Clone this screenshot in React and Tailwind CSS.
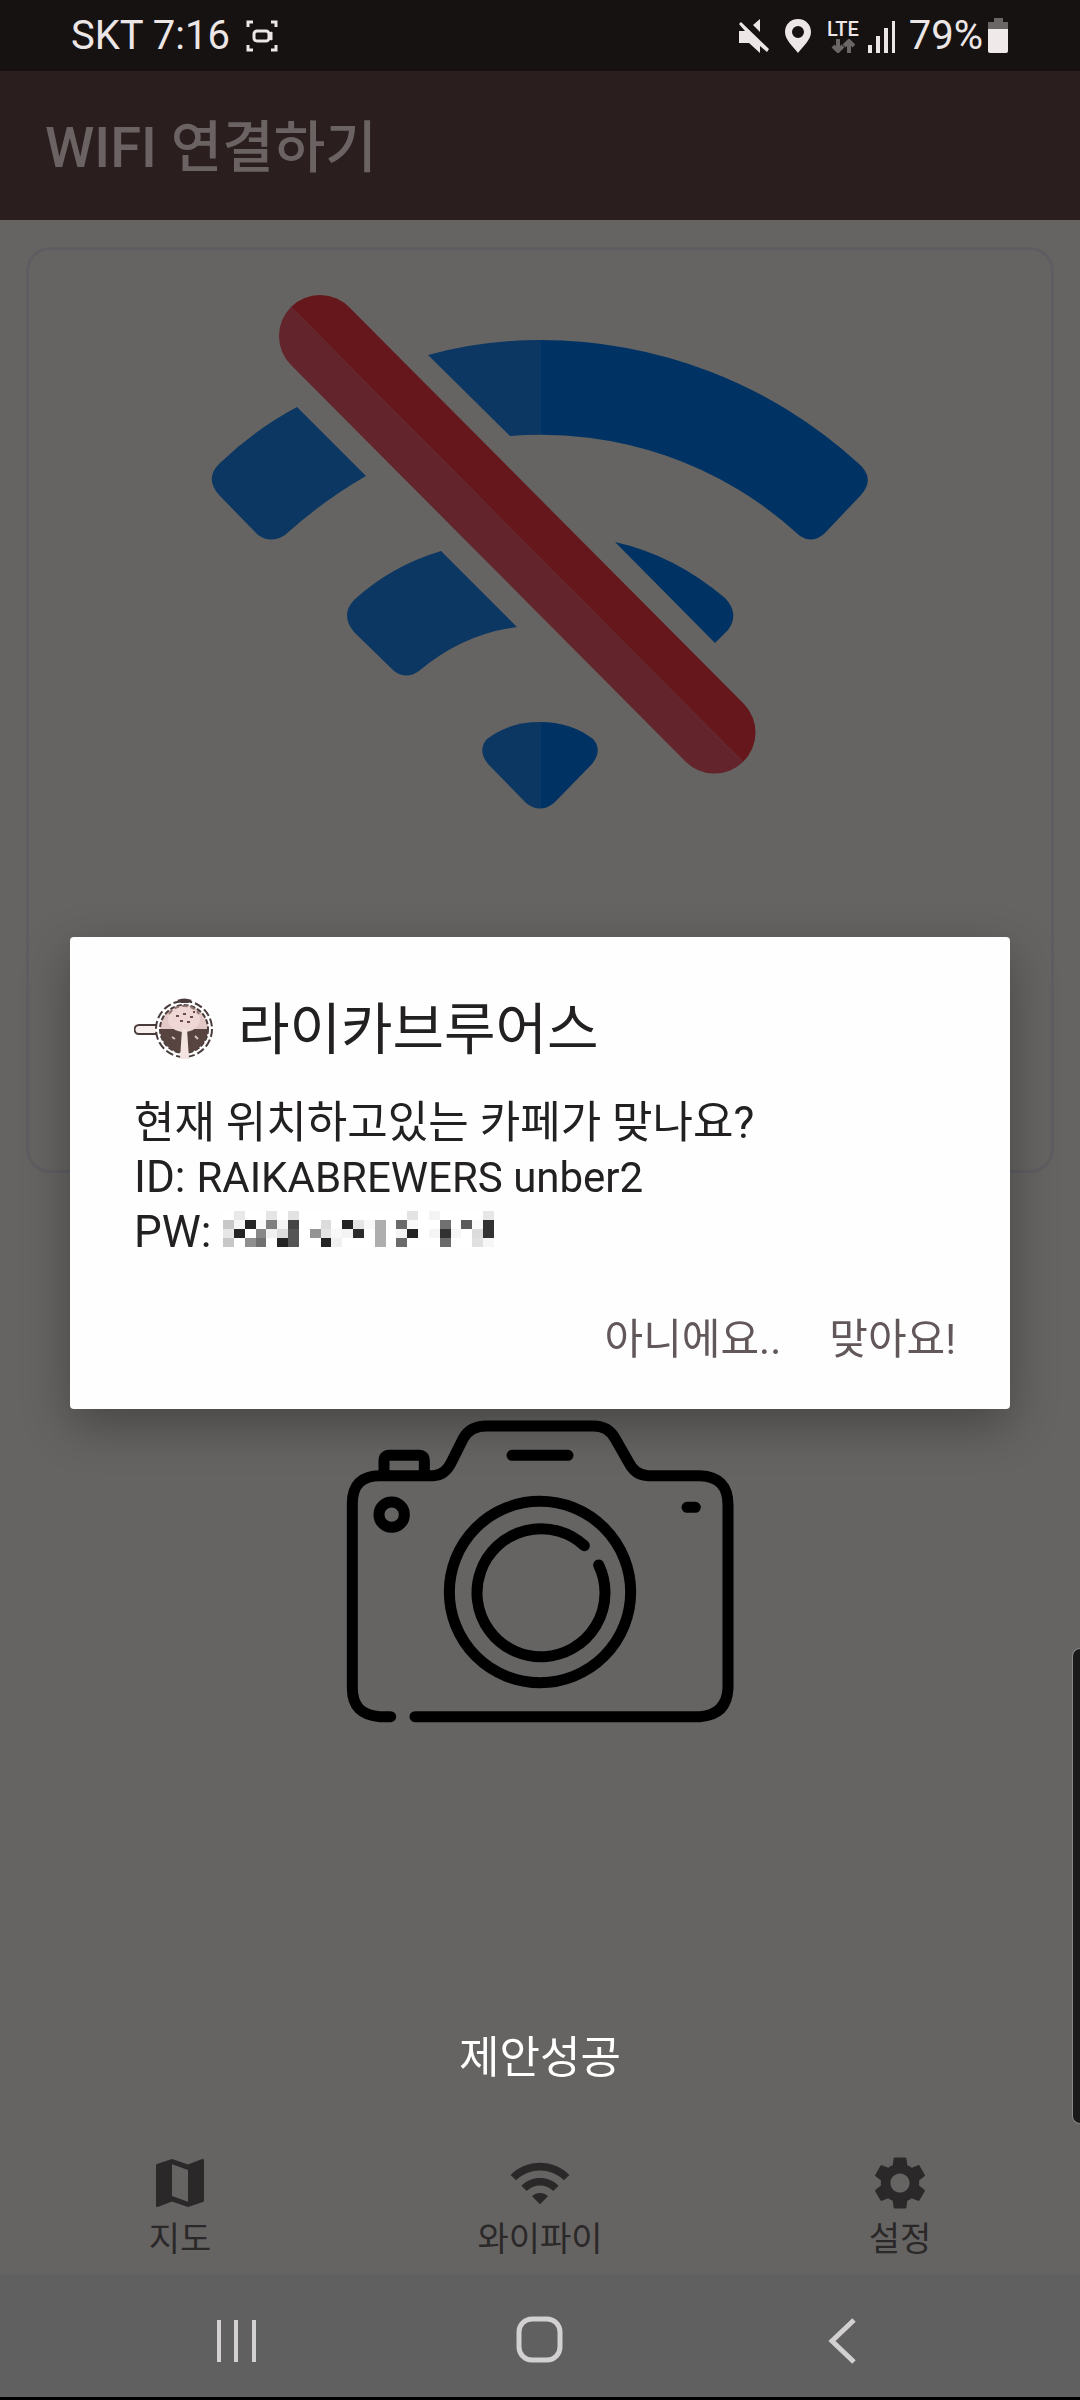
import { MdMap, MdWifi, MdSettings } from "react-icons/md";

const MOSAIC = [
  "ff e8 ff ff e5 ff e2 ff ff ff ff ff ff ff ff ff ff e3 ff f4 ff ff ff ff e6",
  "c7 f5 24 f9 7f f5 45 ff ff dc ff 24 e4 f8 ae ff 6b f8 ff ff 70 ff 5c fa 32",
  "e6 24 ff 88 f0 dd 55 ff 94 e4 f8 f4 2c ff ae ff f4 24 ff f5 32 f6 ff dc 32",
  "c7 ff 8f 70 ff 24 55 ff ff 24 f0 ff ff ff ae ff 6b ff ff ff 6b ff ff e0 f6",
].map((row) => row.split(" "));

function StatusBar() {
  return (
    <div className="flex h-[71px] items-center justify-between bg-[#171212] px-[71px] text-[40px] leading-none text-[#ece6e6]">
      <div className="flex items-center gap-4">
        <span>SKT 7:16</span>
        <svg className="size-8" viewBox="0 0 32 32" fill="none" stroke="currentColor" strokeWidth="3">
          <path d="M2 7V2h5M25 2h5v5M30 25v5h-5M7 30H2v-5" />
          <rect x="8" y="11" width="15" height="10" rx="3" />
          <path d="M23 13l3-1v8l-3-1z" fill="currentColor" strokeWidth="1" />
        </svg>
      </div>
      <div className="flex items-center">
        <svg className="h-[34px] w-[30px]" viewBox="0 0 30 34" fill="currentColor">
          <path d="M0 12h6L0 5l2-2 28 27-2 3-7-6v7l-11-10H0z" />
          <path d="M21 0v13l-7-7z" />
        </svg>
        <svg className="ml-4 h-[34px] w-[26px]" viewBox="0 0 26 34" fill="currentColor">
          <path fillRule="evenodd" d="M13 0C5 0 0 6 0 13c0 8 8 14 13 21 5-7 13-13 13-21C26 6 21 0 13 0zm0 7a6 6 0 1 1 0 12 6 6 0 0 1 0-12z" />
        </svg>
        <div className="ml-4 flex flex-col items-center">
          <span className="text-[20px] leading-[20px] font-medium">LTE</span>
          <svg className="h-[14px] w-[24px] text-[#6a6666]" viewBox="0 0 24 14" fill="none" stroke="currentColor" strokeWidth="4">
            <path d="M7 0v12M2 7l5 5 5-5M18 14V2M13 7l5-5 5 5" />
          </svg>
        </div>
        <svg className="ml-2 h-[34px] w-[30px]" viewBox="0 0 30 34" fill="currentColor">
          <path d="M1 26h4v8H1zM9 17h4v17H9zM17 9h4v25h-4zM25 2h3v32h-3z" />
        </svg>
        <span className="ml-3">79%</span>
        <svg className="ml-1 h-[35px] w-[22px]" viewBox="0 0 22 35">
          <path d="M7 0h9v4h5v8H1V4h6z" fill="#6a6666" />
          <path d="M1 11h20v22a2 2 0 0 1-2 2H3a2 2 0 0 1-2-2z" fill="#efe9e9" />
        </svg>
      </div>
    </div>
  );
}

function WifiOffPicture() {
  return (
    <svg className="h-[560px] w-[720px]" viewBox="180 270 720 560" role="img" aria-label="WIFI">
      <defs>
        <linearGradient id="blue" gradientUnits="userSpaceOnUse" x1="180" x2="900" y1="0" y2="0">
          <stop offset="0.502" stopColor="#0b3762" />
          <stop offset="0.502" stopColor="#003263" />
        </linearGradient>
      </defs>
      <g fill="url(#blue)">
        <path d="M428 355Q482 340 540 340A470 470 0 0 1 858 463Q876 478 861 495L824 534Q812 544 800 536A382 382 0 0 0 510 436Z" />
        <path d="M297 407L366 476Q324 500 285 535Q271 544 258 535L219 495Q204 478 220 463Q254 430 297 407Z" />
        <path d="M441 551L517 627Q463 634 419 671Q406 680 394 671L354 632Q340 615 354 600Q391 566 441 551Z" />
        <path d="M615 542Q674 555 725 598Q740 614 728 630L715 643Z" />
        <path d="M540 722Q571 722 593 739Q603 750 592 764L554 803Q540 814 526 803L488 764Q477 750 487 739Q509 722 540 722Z" />
      </g>
      <path d="M291 307A41 41 0 0 1 350 308L744 704A41 41 0 0 1 743 762Z" fill="#66171b" />
      <path d="M291 307A41 41 0 0 0 291 365L685 761A41 41 0 0 0 743 762Z" fill="#63242b" />
    </svg>
  );
}

function CameraPicture() {
  return (
    <svg className="h-[350px] w-[440px]" viewBox="0 0 1320 1050" fill="none" stroke="#000" strokeWidth="33" strokeLinecap="round">
      <path d="M212 980H180Q97 975 97 895V340Q97 257 180 257H340Q375 257 395 215L430 145Q450 108 500 108H820Q865 108 885 145L925 215Q945 257 985 257H1140Q1224 260 1224 345V895Q1220 975 1140 980H285" />
      <path d="M192 250V212Q192 196 208 196H297Q313 196 313 212V250" />
      <path d="M576 196H744M1101 352H1126" />
      <circle cx="215" cy="374" r="38" />
      <circle cx="660" cy="606" r="272" />
      <path d="M793 467A192 192 0 1 0 836 525" />
    </svg>
  );
}

function CafeLogo() {
  return (
    <svg className="h-[64px] w-[84px]" viewBox="0 0 84 64">
      <path d="M23 27H5a4 4 0 0 0 0 9h18" fill="#f7eeee" stroke="#4a3b3b" strokeWidth="2" />
      <circle cx="50" cy="31" r="28" fill="#fff" stroke="#4a3b3b" strokeWidth="2" strokeDasharray="8 3" />
      <circle cx="50" cy="31" r="24" fill="#e3c9c6" stroke="#4a3b3b" strokeWidth="2" strokeDasharray="5 2" />
      <path d="M26 31h48a24 24 0 0 1-48 0z" fill="#57433f" />
      <ellipse cx="50" cy="21" rx="16" ry="13" fill="#eed7d4" />
      <path d="M35 16q5-8 15-8t15 8" fill="none" stroke="#8d7673" strokeWidth="2" strokeDasharray="5 3" />
      <path d="M48 31h5l2 30h-9z" fill="#f3e4e2" />
      <path d="M43 2q7-3 15 0l-4 3h-7z" fill="#4a3b3b" />
      <path d="M42 18h3M49 16h3M56 19h3M46 23h3M53 24h3M59 14h2" stroke="#6b4a48" strokeWidth="2" />
      <path d="M38 39l3 2M61 38l3 3" stroke="#d9c0bc" strokeWidth="2" />
    </svg>
  );
}

function MaskedPassword() {
  return (
    <svg className="mt-1.5 ml-3 h-9 w-[271px]" viewBox="0 0 25 4" preserveAspectRatio="none" shapeRendering="crispEdges" role="img" aria-label="PW">
      {MOSAIC.map((row, y) =>
        row.map((c, x) => <rect key={`${x}-${y}`} x={x} y={y} width="1" height="1" fill={`#${c}${c}${c}`} />)
      )}
    </svg>
  );
}

function CafeDialog() {
  return (
    <div className="fixed inset-x-0 top-[71px] bottom-[125px] flex items-center px-[70px]">
      <div
        role="dialog"
        aria-labelledby="cafe-name"
        className="w-full rounded-[4px] bg-[#fefefe] pt-[51px] pb-[22px] text-[#222021] shadow-[0_16px_48px_rgba(0,0,0,0.3)]"
      >
        <div className="flex h-[84px] items-center gap-5 px-16">
          <CafeLogo />
          <h2 id="cafe-name" className="text-[56px] leading-[84px]">라이카브루어스</h2>
        </div>
        <div className="mt-6 px-16 text-[44px] leading-[54px]">
          <p>현재 위치하고있는 카페가 맞나요?</p>
          <p>
            ID: <span className="text-[42px]">RAIKABREWERS unber2</span>
          </p>
          <p className="flex items-start">
            PW: <MaskedPassword />
          </p>
        </div>
        <div className="mt-8 flex justify-end pr-[30px] text-[42px] text-[#62585a]">
          <button className="h-24 px-6">아니에요..</button>
          <button className="h-24 px-6">맞아요!</button>
        </div>
      </div>
    </div>
  );
}

function TabBar() {
  const tabs = [
    { label: "지도", Icon: MdMap },
    { label: "와이파이", Icon: MdWifi },
    { label: "설정", Icon: MdSettings },
  ];
  return (
    <nav className="grid h-[152px] grid-cols-3 bg-[#666462] pt-3 text-[#2a2829]">
      {tabs.map(({ label, Icon }) => (
        <button key={label} className="flex flex-col items-center justify-center gap-1">
          <Icon className="size-16" />
          <span className="text-[34px] leading-[40px]">{label}</span>
        </button>
      ))}
    </nav>
  );
}

function SystemNav() {
  return (
    <div className="flex h-[125px] items-center justify-center gap-[239px] border-b-[3px] border-black bg-[#606060] pt-2 text-[#d2d0d0]">
      <button aria-label="Recents">
        <svg className="size-16" viewBox="0 0 64 64" fill="none" stroke="currentColor" strokeWidth="4">
          <path d="M14 12v42M31 12v42M49 12v42" />
        </svg>
      </button>
      <button aria-label="Home">
        <svg className="size-16" viewBox="0 0 64 64" fill="none" stroke="currentColor" strokeWidth="5">
          <rect x="11" y="11" width="41" height="41" rx="13" />
        </svg>
      </button>
      <button aria-label="Back">
        <svg className="size-16" viewBox="0 0 64 64" fill="none" stroke="currentColor" strokeWidth="5">
          <path d="M43 12L21 33l22 21" />
        </svg>
      </button>
    </div>
  );
}

export default function App() {
  return (
    <div className="flex min-h-screen flex-col bg-[#656462] font-[Roboto,'Noto_Sans_CJK_KR',sans-serif]">
      <StatusBar />
      <header className="flex h-[149px] items-center bg-[#2a1f1e] px-[45px] pt-1">
        <h1 className="text-[56px] leading-none font-medium text-[#6b6263]">WIFI 연결하기</h1>
      </header>
      <main className="flex flex-1 flex-col items-center px-[26px] pt-[27px]">
        <section className="flex w-full justify-center rounded-[24px] border-[3px] border-[#5e5d62] pt-5 pb-[340px]">
          <WifiOffPicture />
        </section>
        <button aria-label="카메라" className="mt-[217px]">
          <CameraPicture />
        </button>
      </main>
      <TabBar />
      <SystemNav />
      <CafeDialog />
      <div role="status" className="fixed inset-x-0 bottom-[312px] text-center text-[44px] leading-[60px] text-white">
        제안성공
      </div>
      <div className="fixed right-0 bottom-[276px] h-[476px] w-2 rounded-l-lg border border-r-0 border-[#8a8988] bg-[#191919]" />
    </div>
  );
}
